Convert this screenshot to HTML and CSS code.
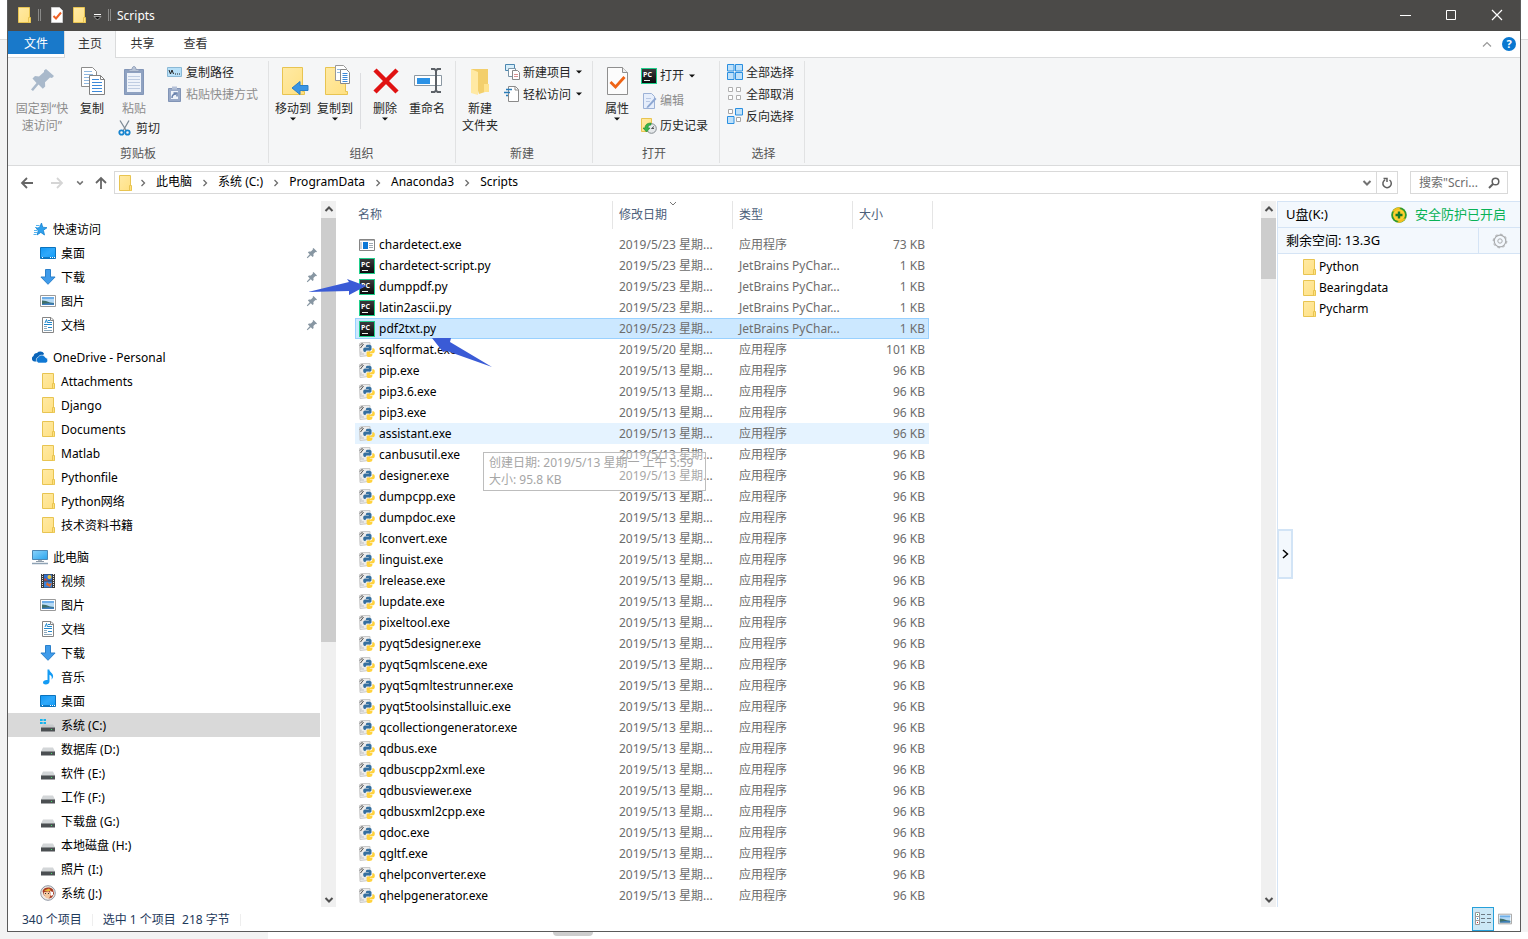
FILE: index.html
```html
<!DOCTYPE html>
<html lang="zh-CN">
<head>
<meta charset="utf-8">
<title>Scripts</title>
<link rel="stylesheet" href="styles.css">
</head>
<body>
<svg class="defs" aria-hidden="true">
  <linearGradient id="gf" x1="0" y1="0" x2="1" y2="1"><stop offset="0" stop-color="#ffeaa5"/><stop offset="1" stop-color="#ffe081"/></linearGradient>
  <linearGradient id="gd" x1="0" y1="0" x2="1" y2="1"><stop offset="0" stop-color="#0f97f5"/><stop offset=".5" stop-color="#2fa9fb"/><stop offset="1" stop-color="#0f9bf8"/></linearGradient>
  <linearGradient id="gm" x1="0" y1="0" x2="1" y2="1"><stop offset="0" stop-color="#8bd3fb"/><stop offset="1" stop-color="#2aa5ee"/></linearGradient>
  <linearGradient id="gp" x1="0" y1="0" x2="0" y2="1"><stop offset="0" stop-color="#3a3a3c"/><stop offset="1" stop-color="#0b0b0d"/></linearGradient>
  <symbol id="folder" viewBox="0 0 16 16"><path d="M2.500.5h11v11h1v4h-12z" fill="url(#gf)" stroke="#e8c451"/><path d="M12.500 15v-4.500h2v5" fill="#ffe17f" stroke="#e8c451"/></symbol>
  <symbol id="star" viewBox="0 0 16 16"><path d="M9.500 2l1.200 4.200 4.300.5-3.600 2.600 1.100 4.700-3.700-2.600-3.800 2.600 1.300-4.500L4 7.300l3.500-.8z" fill="#2ea0ec" stroke="#1683d0" stroke-width=".8"/><path d="M4 4.500h3.500M3 6.500h2M2 9.500h3.500M2 11.500h3M1.500 13.500h3" stroke="#56b3ee"/></symbol>
  <symbol id="desktop" viewBox="0 0 16 16"><path d="M.5 2.500h15v11H.5z" fill="url(#gd)" stroke="#0b73bd"/><path d="M1 12.500h14" stroke="#0f79c4"/><path d="M2 12.500h1M10 12.500h1M12 12.500h1M14 12.500h1" stroke="#fff"/></symbol>
  <symbol id="down" viewBox="0 0 16 16"><path d="M5.500.5h5v7.500h4.600L8 15.300.9 8h4.600z" fill="#3f9bea" stroke="#2b80cb"/></symbol>
  <symbol id="picture" viewBox="0 0 16 16"><path d="M.5 2.500h15v11H.5z" fill="#fff" stroke="#9a9a9a"/><path d="M2 4h12v8H2z" fill="#b5d9f5"/><path d="M2 4h12v2H2z" fill="#6eaee8"/><path d="M2 7.500l4 .5 4 1.500 4 .5v2H2z" fill="#3f6f6a"/><path d="M2 11l6-.7 6 .3V12H2z" fill="#3e7fc0"/></symbol>
  <symbol id="docs" viewBox="0 0 16 16"><path d="M2.500.5h8.500l2.500 2.500v12.500h-11z" fill="#fff" stroke="#858585"/><path d="M10.500.5v3h3" fill="none" stroke="#858585"/><path d="M5 6l1.500-3.500L7.500 6M8 3.500h2M8 5.500h4M4 7.500h8M8 10.500h4" fill="none" stroke="#2288cc"/><path d="M4 9.500h3M4 11.500h3M4 13.500h8" stroke="#8da9bd"/></symbol>
  <symbol id="cloud" viewBox="0 0 16 16"><path d="M2.500 12.500A2.900 2.900 0 0 1 1.500 7 3.800 3.800 0 0 1 5 4 4.500 4.500 0 0 1 12 4.500L8 12.500z" fill="#0a64b8"/><path d="M6.500 14a3.200 3.200 0 0 1-.3-6 4.200 4.200 0 0 1 7.300.5A2.900 2.900 0 0 1 14 14z" fill="#0f78d4" stroke="#fff" stroke-width=".6"/></symbol>
  <symbol id="pc" viewBox="0 0 16 16"><path d="M.5 1.500h15v9H.5z" fill="url(#gm)" stroke="#4d87b4"/><path d="M6 11h4v1H6z" fill="#aab4bc"/><path d="M4 12.500h8" stroke="#8e9ba8"/><path d="M0 14.500h16" stroke="#8fa3b5" stroke-width="1.500"/></symbol>
  <symbol id="video" viewBox="0 0 16 16"><path d="M1 1h14v14H1z" fill="#3b3b3b"/><path d="M2.500 1v14M13.500 1v14" stroke="#e8e8e8" stroke-dasharray="1 1"/><path d="M4 1.500h8v6H4z" fill="#2f6fd0"/><path d="M4 8.500h8v6H4z" fill="#3b83dc"/><circle cx="9.500" cy="4" r="2" fill="#e8c33f"/><path d="M5 5l3 2.500H4z" fill="#d8452f"/><path d="M7 9l2 2 3-1-2 4-4-2z" fill="#e06a2a"/></symbol>
  <symbol id="music" viewBox="0 0 16 16"><path d="M7.500.5h1.800c.2 2.500 4 3.500 3.800 7-.1 1.300-.9 2.300-1.600 3 .8-2.600 0-3.900-2-4.800v6.800c0 1.800-1.800 3-3.800 3-1.600 0-2.700-.8-2.700-2 0-1.600 2-2.800 4.500-2.500z" fill="#149bf4"/></symbol>
  <symbol id="drive" viewBox="0 0 16 16"><path d="M3 6.500h10l2 4H1z" fill="#d3d6d8"/><path d="M1 10.500h14v4H1z" fill="#4b4f52"/><path d="M1 10.500h14" stroke="#8c9092"/><path d="M11 12.500h1" stroke="#46e36b"/></symbol>
  <symbol id="sysdrive" viewBox="0 0 16 16"><path d="M3 7.500h10l2 3H1z" fill="#c6c9cb"/><path d="M1 10.500h14v4H1z" fill="#4b4f52"/><path d="M11 12.500h1" stroke="#46e36b"/><path d="M0 2h2.700v2H0zM3.500 2H6v2H3.500zM0 5h2.700v2H0zM3.500 5H6v2H3.500z" fill="#16b3ee"/></symbol>
  <symbol id="face" viewBox="0 0 16 16"><circle cx="8" cy="8" r="7.300" fill="#efe9e2" stroke="#8f96a3"/><path d="M2.500 6C4 2 10 1.500 13 4.500l1 4-2 4-3 1-5-3z" fill="#a63a24"/><path d="M4 5.500l5-2 2 2-3 1z" fill="#e8b93c"/><path d="M4 7l5-.5 2 3-2 4-3-.5-2-3z" fill="#f3c7a0"/><path d="M10 6l3 1v3l-2 1z" fill="#fff"/><path d="M5 8.500h1M8 8.500h1" stroke="#333"/></symbol>
  <symbol id="pin" viewBox="0 0 12 12"><path d="M7.500 1L11 4.500l-.8.8-.8-.2-2 2 .2 2-1 1L4.800 8.300 1.500 11.200l-.7-.7 2.900-3.300L1.900 5.400l1-1 2 .2 2-2-.2-.8z" fill="#8796a2"/></symbol>
  <symbol id="pycharm" viewBox="0 0 16 16"><path d="M0 0h16v16H0z" fill="#20cf8c"/><path d="M1 1h14v14H1z" fill="url(#gp)"/><path d="M3 12.500h6" stroke="#eee"/><text x="2" y="8.500" class="pct">PC</text></symbol>
  <symbol id="exe" viewBox="0 0 16 16"><path d="M.5 2.500h15v11H.5z" fill="#fff" stroke="#858585"/><path d="M1 3.500h14" stroke="#b5b5b5"/><path d="M4 5h5v7H4z" fill="#0b78d7"/><path d="M2 5v7M10 6.500h4M10 8.500h4M10 10.500h4" stroke="#9fa9b2"/></symbol>
  <symbol id="pyexe" viewBox="0 0 16 16"><path d="M.5 1.500l2-1h8.500v3l-1 10-9 1z" fill="#ececec" stroke="#c9c9c9"/><path d="M1 3.500L3.500 1M1.500 6l3-4" stroke="#4a4a4a"/><path d="M2 9.500v3.500M4 11v2" stroke="#bdbdbd"/><path d="M9.500 2.700c2 0 3 .5 3 1.600v2.900c0 .9-.7 1.300-1.500 1.300H8.200C7 8.500 6.600 9.200 6.600 10H5.700C4.600 10 4.200 8.900 4.200 7.500S5 5.400 6 5.400h3.800V4.900H6.900V4.100c0-1 1.200-1.400 2.600-1.400z" fill="#356f9f"/><path d="M13.300 6.300h1c1 0 1.500 1.100 1.500 2.500s-.6 2.500-1.600 2.500h-3.600v.5h2.800v1.300c0 1.300-1.200 1.900-2.900 1.900s-2.900-.5-2.900-1.800V10.800c0-.9.700-1.400 1.500-1.400h2.500c1 0 1.700-.8 1.700-1.700z" fill="#ffd23e"/></symbol>
  <symbol id="crumb" viewBox="0 0 8 8"><path d="M2.500 1L5.500 4 2.500 7" fill="none" stroke="#6d6d6d" stroke-width="1.300"/></symbol>
  <symbol id="up" viewBox="0 0 10 10"><path d="M1.500 7L5 3.500 8.500 7" fill="none" stroke="#505050" stroke-width="2"/></symbol>
  <symbol id="dn" viewBox="0 0 10 10"><path d="M1.500 3L5 6.500 8.500 3" fill="none" stroke="#505050" stroke-width="2"/></symbol>
  <symbol id="tri" viewBox="0 0 6 4"><path d="M0 .5h6L3 3.500z" fill="#111"/></symbol>
</svg>

<div class="window">
  <header class="titlebar">
    <svg class="i"><use href="#folder"/></svg>
    <span class="bars"></span>
    <svg class="i"><path d="M2.500.5h8l3 3v12h-11z" fill="#fff" stroke="#ccc"/><path d="M4.500 9l2.500 2.500 5-6" fill="none" stroke="#ee6125" stroke-width="2"/></svg>
    <svg class="i qa"><use href="#folder"/></svg>
    <svg class="i qd" viewBox="0 0 16 16"><path d="M5 7.500h7" stroke="#fff"/><path d="M5 9.500h7L8.500 13z" fill="#111" stroke="#ddd" stroke-width=".6"/></svg>
    <span class="bars b2"></span>
    <h1>Scripts</h1>
    <div class="controls">
      <button aria-label="最小化"><svg class="i12"><path d="M1 6.500h11" stroke="#fff"/></svg></button>
      <button aria-label="最大化"><svg class="i12"><path d="M1.500 1.500h9v9h-9z" fill="none" stroke="#fff"/></svg></button>
      <button aria-label="关闭"><svg class="i12"><path d="M1 1l10 10M11 1L1 11" stroke="#fff" stroke-width="1.200"/></svg></button>
    </div>
  </header>

  <nav class="tabs">
    <button class="file">文件</button>
    <button class="active">主页</button>
    <button>共享</button>
    <button>查看</button>
    <span class="tabtools">
      <button aria-label="折叠"><svg class="i12"><path d="M2 8.500l4-4 4 4" fill="none" stroke="#999" stroke-width="1.200"/></svg></button>
      <button class="help" aria-label="帮助">?</button>
    </span>
  </nav>

  <div class="ribbon">
    <section class="group g1">
      <div class="tools">
        <button class="big w60 off"><svg class="i32"><path d="M18 5l8 7-2 2-2-.4-5 4.600.2 4.300-2.400 2.300-4.300-4.200L5 27l-2-1.500L8.500 19l-4-4.500L7 12l4 .4 5-4.500V6.500z" transform="translate(2 -1)" fill="#a9b9cb"/></svg>固定到“快<br>速访问”</button>
        <button class="big w40"><svg class="i32"><path d="M5.500 2.500h11l4 4v15h-15z" fill="#fff" stroke="#8c8c8c"/><path d="M8 6.500h8M8 9.500h9M8 12.500h9M8 15.500h9M8 18.500h9" stroke="#8fb8e0"/><path d="M13.500 10.500h11l4 4v15h-15z" fill="#fff" stroke="#808080"/><path d="M24.500 10.500v4h4" fill="none" stroke="#808080"/><path d="M16 14.500h7M16 17.500h10M16 20.500h10M16 23.500h10M16 26.500h10" stroke="#3d89d8"/></svg>复制</button>
        <div class="col">
          <button class="big w34 off"><svg class="i32"><path d="M6.500 4.500h19v25h-19z" fill="#8fa2c1" stroke="#8296b8"/><path d="M9 8h14v19H9z" fill="#eef3fa"/><path d="M10 11.500h12M10 14.500h12M10 17.500h12M10 20.500h12M10 23.500h12" stroke="#bfcde2"/><path d="M11 6.500h10v-2h-3c0-4-4-4-4 0h-3z" fill="#b8c4d6" stroke="#8e9db8"/></svg>粘贴</button>
          <button class="sm cut"><svg class="i"><path d="M3 .5L9.500 11M12 .5L6 11" stroke="#7d8b96" stroke-width="1.300"/><circle cx="4.500" cy="12.500" r="2.200" fill="none" stroke="#1784cf" stroke-width="1.800"/><circle cx="10.500" cy="12.500" r="2.200" fill="none" stroke="#1784cf" stroke-width="1.800"/></svg>剪切</button>
        </div>
        <div class="list pad">
          <button class="sm"><svg class="i"><path d="M.5 3.500h14v9H.5z" fill="#b7e0f8" stroke="#8bb9d6"/><path d="M2 6l1.500 4L5 6l1.500 4" fill="none" stroke="#222" /><path d="M8 10h1M10 10h1M12 10h1" stroke="#222"/></svg>复制路径</button>
          <button class="sm off"><svg class="i"><path d="M1.500 2.500h12v13h-12z" fill="#98a9c8" stroke="#8194b6"/><path d="M4 5h7v8H4z" fill="#eef3fa"/><path d="M5 .5h5v3H5z" fill="#b4c0d6"/><path d="M5 12c0-3 1-4 4-4M6.500 7H10v3.500" fill="none" stroke="#6982ad" stroke-width="1.500"/></svg>粘贴快捷方式</button>
        </div>
      </div>
      <h2>剪贴板</h2>
    </section>
    <section class="group g2">
      <div class="tools">
        <button class="big w42"><svg class="i32"><path d="M5.500 2.500h20v24h2v3h-22z" fill="url(#gf)" stroke="#e8c451"/><path d="M31 20.500h-8v-4l-8 6.500 8 6.500v-4h8z" fill="#3a95e4" stroke="#2a7fc8"/></svg>移动到<svg class="t"><use href="#tri"/></svg></button>
        <button class="big w42"><svg class="i32"><path d="M6.500 2.500h20v24h2v3h-22z" fill="url(#gf)" stroke="#e8c451"/><path d="M16.500.5h8l3 3v12h-11z" fill="#fff" stroke="#999"/><path d="M18 4.500h7M18 7.500h7" stroke="#8fb8e0"/><path d="M21.500 4.500h6l3 3v11h-9z" fill="#fff" stroke="#888"/><path d="M23.500 8.500h5M23.500 10.500h5M23.500 12.500h5M23.500 14.500h5M23.500 16.500h5" stroke="#3d89d8"/></svg>复制到<svg class="t"><use href="#tri"/></svg></button>
        <span class="sep"></span>
        <button class="big w42"><svg class="i32"><path d="M6 5l22 22M28 5L6 27" stroke="#e01212" stroke-width="4.500"/></svg>删除<svg class="t"><use href="#tri"/></svg></button>
        <button class="big w42"><svg class="i32"><path d="M3.500 10.500h27v10h-27z" fill="#fff" stroke="#8b98a3"/><path d="M6 13h13v6H6z" fill="#2b92e6"/><path d="M20 4h3.500l1.500 1.500L26.500 4H30M25 5v21M20 27h3.500l1.500-1.500 1.500 1.500H30" fill="none" stroke="#5c6167" stroke-width="2"/></svg>重命名</button>
      </div>
      <h2>组织</h2>
    </section>
    <section class="group g3">
      <div class="tools">
        <button class="big w48"><svg class="i32"><path d="M7 4h17v22l-9 3z" fill="#f3cf6c"/><path d="M7 4l7 3v23l-7-2z" fill="#ffe9a4"/><path d="M20 19h5v8h-5z" fill="#ffe38e"/></svg>新建<br>文件夹</button>
        <div class="list">
          <button class="sm"><svg class="i"><path d="M1.500.5h9v6h-9z" fill="#d7eefa" stroke="#4c87b0"/><path d="M4.500 4.500h7v8h-7z" fill="#fff" stroke="#7a95a8"/><path d="M8.500 6.500h5l2 2v7h-7z" fill="#fff" stroke="#888"/><path d="M10 10.500h4M10 12.500h4" stroke="#d89090"/></svg>新建项目<svg class="t"><use href="#tri"/></svg></button>
          <button class="sm"><svg class="i"><path d="M4.500.5h7l3 3v12h-10z" fill="#fff" stroke="#8a8a8a"/><path d="M11 .5v3.500h3.500" fill="none" stroke="#8a8a8a"/><path d="M2 3.500h6M0 6.500h6M2 9.500h2" stroke="#2a7cb8" stroke-width="1.400"/></svg>轻松访问<svg class="t"><use href="#tri"/></svg></button>
        </div>
      </div>
      <h2>新建</h2>
    </section>
    <section class="group g4">
      <div class="tools">
        <button class="big w48"><svg class="i32"><path d="M6.500 2.500h15l5 5v22h-20z" fill="#fcfcfc" stroke="#8f8f8f"/><path d="M21.500 2.500v5h5" fill="#eee" stroke="#8f8f8f"/><path d="M9.500 17l5 5 9-10" fill="none" stroke="#ef6416" stroke-width="2.800"/></svg>属性<svg class="t"><use href="#tri"/></svg></button>
        <div class="list tall">
          <button class="sm"><svg class="i"><use href="#pycharm"/></svg>打开<svg class="t"><use href="#tri"/></svg></button>
          <button class="sm off"><svg class="i"><path d="M2.500.5h8l3 3v12h-11z" fill="#e6eefb" stroke="#9db2d6"/><path d="M5 5.500h5M5 8.500h4" stroke="#b8c8e4"/><path d="M6 13.500l8-9 1.500 1.500-8 8.500-2 .5z" fill="#8fa8d2"/></svg>编辑</button>
          <button class="sm"><svg class="i"><path d="M.5.5h10v13H.5z" fill="url(#gf)" stroke="#e8c451"/><circle cx="10.500" cy="10.500" r="4.800" fill="#e5e8ea" stroke="#858b90"/><path d="M10.500 10.500l2.500-2M10.500 10.500H13" stroke="#555"/><path d="M10 5C5 5 4 8 4 10H2l3.500 4L9 10H7c0-2 1-3 3-3z" fill="#39b44a" stroke="#1e8a32" stroke-width=".6"/></svg>历史记录</button>
        </div>
      </div>
      <h2>打开</h2>
    </section>
    <section class="group g5">
      <div class="tools">
        <div class="list">
          <button class="sm"><svg class="i"><path d="M.5.500h6.500v6.500H.5zM8.500.5h7v6.500h-7zM.5 8.500h6.500v7H.5zM8.500 8.500h7v7h-7z" fill="#bfe1fa" stroke="#2a8fe0"/></svg>全部选择</button>
          <button class="sm"><svg class="i"><path d="M1.500 1.500h4v4h-4zM9.500 1.500h4v4h-4zM1.500 9.500h4v4h-4zM9.500 9.500h4v4h-4z" fill="#fff" stroke="#b0b0b0"/></svg>全部取消</button>
          <button class="sm"><svg class="i"><path d="M1.500 1.500h4v4h-4zM9.500 9.500h4v4h-4z" fill="#fff" stroke="#a5a5a5"/><path d="M8.500.5h7v6.500h-7zM.5 8.500h6.500v7H.5z" fill="#bfe1fa" stroke="#2a8fe0"/></svg>反向选择</button>
        </div>
      </div>
      <h2>选择</h2>
    </section>
  </div>

  <div class="addressrow">
    <button class="nb w30" aria-label="后退"><svg class="i14"><path d="M13 7H2M7 2L2 7l5 5" fill="none" stroke="#666" stroke-width="1.800"/></svg></button>
    <button class="nb w30" aria-label="前进"><svg class="i14"><path d="M1 7h11M7 2l5 5-5 5" fill="none" stroke="#d5d5d5" stroke-width="1.800"/></svg></button>
    <button class="nb w16" aria-label="最近位置"><svg class="i8 soft"><use href="#dn"/></svg></button>
    <button class="nb w26" aria-label="上移"><svg class="i14"><path d="M7 13V2M2 7l5-5 5 5" fill="none" stroke="#666" stroke-width="1.800"/></svg></button>
    <div class="address">
      <svg class="i"><use href="#folder"/></svg>
      <svg class="c"><use href="#crumb"/></svg><a href="#pc">此电脑</a>
      <svg class="c"><use href="#crumb"/></svg><a href="#c">系统 (C:)</a>
      <svg class="c"><use href="#crumb"/></svg><a href="#pd">ProgramData</a>
      <svg class="c"><use href="#crumb"/></svg><a href="#an">Anaconda3</a>
      <svg class="c"><use href="#crumb"/></svg><a href="#sc">Scripts</a>
      <button class="nb hist" aria-label="历史"><svg class="i10 soft"><use href="#dn"/></svg></button>
      <button class="nb refresh" aria-label="刷新"><svg class="i12"><path d="M4 2.800A4.200 4.200 0 1 0 8.500 3M2.500 1.500H6V5" fill="none" stroke="#606060" stroke-width="1.500"/></svg></button>
    </div>
    <label class="search"><input type="text" aria-label="搜索" placeholder="搜索&quot;Scri..."><svg class="i12"><circle cx="7.500" cy="4.500" r="3.300" fill="none" stroke="#606060" stroke-width="1.500"/><path d="M5 7L1 11" stroke="#606060" stroke-width="2"/></svg></label>
  </div>

  <main class="body">
    <nav class="tree">
      <ul>
        <li><a href="#q"><svg class="i"><use href="#star"/></svg>快速访问</a>
          <ul>
            <li><a href="#d"><svg class="i"><use href="#desktop"/></svg>桌面<svg class="p"><use href="#pin"/></svg></a></li>
            <li><a href="#d"><svg class="i"><use href="#down"/></svg>下载<svg class="p"><use href="#pin"/></svg></a></li>
            <li><a href="#d"><svg class="i"><use href="#picture"/></svg>图片<svg class="p"><use href="#pin"/></svg></a></li>
            <li><a href="#d"><svg class="i"><use href="#docs"/></svg>文档<svg class="p"><use href="#pin"/></svg></a></li>
          </ul>
        </li>
        <li><a href="#o"><svg class="i"><use href="#cloud"/></svg>OneDrive - Personal</a>
          <ul>
            <li><a href="#o"><svg class="i"><use href="#folder"/></svg>Attachments</a></li>
            <li><a href="#o"><svg class="i"><use href="#folder"/></svg>Django</a></li>
            <li><a href="#o"><svg class="i"><use href="#folder"/></svg>Documents</a></li>
            <li><a href="#o"><svg class="i"><use href="#folder"/></svg>Matlab</a></li>
            <li><a href="#o"><svg class="i"><use href="#folder"/></svg>Pythonfile</a></li>
            <li><a href="#o"><svg class="i"><use href="#folder"/></svg>Python网络</a></li>
            <li><a href="#o"><svg class="i"><use href="#folder"/></svg>技术资料书籍</a></li>
          </ul>
        </li>
        <li><a href="#p"><svg class="i"><use href="#pc"/></svg>此电脑</a>
          <ul>
            <li><a href="#p"><svg class="i"><use href="#video"/></svg>视频</a></li>
            <li><a href="#p"><svg class="i"><use href="#picture"/></svg>图片</a></li>
            <li><a href="#p"><svg class="i"><use href="#docs"/></svg>文档</a></li>
            <li><a href="#p"><svg class="i"><use href="#down"/></svg>下载</a></li>
            <li><a href="#p"><svg class="i"><use href="#music"/></svg>音乐</a></li>
            <li><a href="#p"><svg class="i"><use href="#desktop"/></svg>桌面</a></li>
            <li><a href="#p" class="current"><svg class="i"><use href="#sysdrive"/></svg>系统 (C:)</a></li>
            <li><a href="#p"><svg class="i"><use href="#drive"/></svg>数据库 (D:)</a></li>
            <li><a href="#p"><svg class="i"><use href="#drive"/></svg>软件 (E:)</a></li>
            <li><a href="#p"><svg class="i"><use href="#drive"/></svg>工作 (F:)</a></li>
            <li><a href="#p"><svg class="i"><use href="#drive"/></svg>下载盘 (G:)</a></li>
            <li><a href="#p"><svg class="i"><use href="#drive"/></svg>本地磁盘 (H:)</a></li>
            <li><a href="#p"><svg class="i"><use href="#drive"/></svg>照片 (I:)</a></li>
            <li><a href="#p"><svg class="i"><use href="#face"/></svg>系统 (J:)</a></li>
          </ul>
        </li>
      </ul>
    </nav>
    <div class="scroll"><svg class="i10"><use href="#up"/></svg><div class="track"><div class="thumb t1"></div></div><svg class="i10"><use href="#dn"/></svg></div>

    <div class="files">
      <table>
        <colgroup><col class="cn"><col class="cd"><col class="cd"><col class="cs"><col class="ce"></colgroup>
        <thead><tr><th><span class="h first">名称</span></th><th><span class="h">修改日期<svg class="sort"><path d="M1 1l3 3 3-3" fill="none" stroke="#777"/></svg></span></th><th><span class="h">类型</span></th><th colspan="2"><span class="h">大小</span></th></tr></thead>
        <tbody>
          <tr><td><svg class="i"><use href="#exe"/></svg>chardetect.exe</td><td>2019/5/23 星期...</td><td>应用程序</td><td>73 KB</td></tr>
          <tr><td><svg class="i"><use href="#pycharm"/></svg>chardetect-script.py</td><td>2019/5/23 星期...</td><td>JetBrains PyChar...</td><td>1 KB</td></tr>
          <tr><td><svg class="i"><use href="#pycharm"/></svg>dumppdf.py</td><td>2019/5/23 星期...</td><td>JetBrains PyChar...</td><td>1 KB</td></tr>
          <tr><td><svg class="i"><use href="#pycharm"/></svg>latin2ascii.py</td><td>2019/5/23 星期...</td><td>JetBrains PyChar...</td><td>1 KB</td></tr>
          <tr class="selected"><td><svg class="i"><use href="#pycharm"/></svg>pdf2txt.py</td><td>2019/5/23 星期...</td><td>JetBrains PyChar...</td><td>1 KB</td></tr>
          <tr><td><svg class="i"><use href="#pyexe"/></svg>sqlformat.exe</td><td>2019/5/20 星期...</td><td>应用程序</td><td>101 KB</td></tr>
          <tr><td><svg class="i"><use href="#pyexe"/></svg>pip.exe</td><td>2019/5/13 星期...</td><td>应用程序</td><td>96 KB</td></tr>
          <tr><td><svg class="i"><use href="#pyexe"/></svg>pip3.6.exe</td><td>2019/5/13 星期...</td><td>应用程序</td><td>96 KB</td></tr>
          <tr><td><svg class="i"><use href="#pyexe"/></svg>pip3.exe</td><td>2019/5/13 星期...</td><td>应用程序</td><td>96 KB</td></tr>
          <tr class="hover"><td><svg class="i"><use href="#pyexe"/></svg>assistant.exe</td><td>2019/5/13 星期...</td><td>应用程序</td><td>96 KB</td></tr>
          <tr><td><svg class="i"><use href="#pyexe"/></svg>canbusutil.exe</td><td>2019/5/13 星期...</td><td>应用程序</td><td>96 KB</td></tr>
          <tr><td><svg class="i"><use href="#pyexe"/></svg>designer.exe</td><td>2019/5/13 星期...</td><td>应用程序</td><td>96 KB</td></tr>
          <tr><td><svg class="i"><use href="#pyexe"/></svg>dumpcpp.exe</td><td>2019/5/13 星期...</td><td>应用程序</td><td>96 KB</td></tr>
          <tr><td><svg class="i"><use href="#pyexe"/></svg>dumpdoc.exe</td><td>2019/5/13 星期...</td><td>应用程序</td><td>96 KB</td></tr>
          <tr><td><svg class="i"><use href="#pyexe"/></svg>lconvert.exe</td><td>2019/5/13 星期...</td><td>应用程序</td><td>96 KB</td></tr>
          <tr><td><svg class="i"><use href="#pyexe"/></svg>linguist.exe</td><td>2019/5/13 星期...</td><td>应用程序</td><td>96 KB</td></tr>
          <tr><td><svg class="i"><use href="#pyexe"/></svg>lrelease.exe</td><td>2019/5/13 星期...</td><td>应用程序</td><td>96 KB</td></tr>
          <tr><td><svg class="i"><use href="#pyexe"/></svg>lupdate.exe</td><td>2019/5/13 星期...</td><td>应用程序</td><td>96 KB</td></tr>
          <tr><td><svg class="i"><use href="#pyexe"/></svg>pixeltool.exe</td><td>2019/5/13 星期...</td><td>应用程序</td><td>96 KB</td></tr>
          <tr><td><svg class="i"><use href="#pyexe"/></svg>pyqt5designer.exe</td><td>2019/5/13 星期...</td><td>应用程序</td><td>96 KB</td></tr>
          <tr><td><svg class="i"><use href="#pyexe"/></svg>pyqt5qmlscene.exe</td><td>2019/5/13 星期...</td><td>应用程序</td><td>96 KB</td></tr>
          <tr><td><svg class="i"><use href="#pyexe"/></svg>pyqt5qmltestrunner.exe</td><td>2019/5/13 星期...</td><td>应用程序</td><td>96 KB</td></tr>
          <tr><td><svg class="i"><use href="#pyexe"/></svg>pyqt5toolsinstalluic.exe</td><td>2019/5/13 星期...</td><td>应用程序</td><td>96 KB</td></tr>
          <tr><td><svg class="i"><use href="#pyexe"/></svg>qcollectiongenerator.exe</td><td>2019/5/13 星期...</td><td>应用程序</td><td>96 KB</td></tr>
          <tr><td><svg class="i"><use href="#pyexe"/></svg>qdbus.exe</td><td>2019/5/13 星期...</td><td>应用程序</td><td>96 KB</td></tr>
          <tr><td><svg class="i"><use href="#pyexe"/></svg>qdbuscpp2xml.exe</td><td>2019/5/13 星期...</td><td>应用程序</td><td>96 KB</td></tr>
          <tr><td><svg class="i"><use href="#pyexe"/></svg>qdbusviewer.exe</td><td>2019/5/13 星期...</td><td>应用程序</td><td>96 KB</td></tr>
          <tr><td><svg class="i"><use href="#pyexe"/></svg>qdbusxml2cpp.exe</td><td>2019/5/13 星期...</td><td>应用程序</td><td>96 KB</td></tr>
          <tr><td><svg class="i"><use href="#pyexe"/></svg>qdoc.exe</td><td>2019/5/13 星期...</td><td>应用程序</td><td>96 KB</td></tr>
          <tr><td><svg class="i"><use href="#pyexe"/></svg>qgltf.exe</td><td>2019/5/13 星期...</td><td>应用程序</td><td>96 KB</td></tr>
          <tr><td><svg class="i"><use href="#pyexe"/></svg>qhelpconverter.exe</td><td>2019/5/13 星期...</td><td>应用程序</td><td>96 KB</td></tr>
          <tr><td><svg class="i"><use href="#pyexe"/></svg>qhelpgenerator.exe</td><td>2019/5/13 星期...</td><td>应用程序</td><td>96 KB</td></tr>
        </tbody>
      </table>
      <div class="tooltip" role="tooltip">创建日期: 2019/5/13 星期一 上午 5:59<br>大小: 95.8 KB</div>
    </div>
    <div class="scroll"><svg class="i10"><use href="#up"/></svg><div class="track"><div class="thumb t2"></div></div><svg class="i10"><use href="#dn"/></svg></div>

    <aside class="usb">
      <div class="urow"><span>U盘(K:)</span><svg class="i shield"><circle cx="8" cy="8" r="7.800" fill="#2f9a2c"/><circle cx="8" cy="8" r="6" fill="#ffcf2e"/><path d="M1 5A8 8 0 0 1 10 .5L7 3z" fill="#f4c01e"/><path d="M15 11a8 8 0 0 1-9 4.500L9 13z" fill="#f4c01e"/><path d="M8 4.500v7M4.500 8h7" stroke="#167a28" stroke-width="2.400"/></svg><span class="safe">安全防护已开启</span></div>
      <div class="urow"><span>剩余空间: 13.3G</span><button class="gear" aria-label="设置"><svg class="i"><circle cx="8" cy="8" r="5.800" fill="none" stroke="#a9abad" stroke-width="1.200"/><circle cx="8" cy="8" r="6.800" fill="none" stroke="#a9abad" stroke-dasharray="2.600 2.700"/><circle cx="8" cy="8" r="2.200" fill="none" stroke="#a9abad"/></svg></button></div>
      <ul>
        <li><a href="#u"><svg class="i"><use href="#folder"/></svg>Python</a></li>
        <li><a href="#u"><svg class="i"><use href="#folder"/></svg>Bearingdata</a></li>
        <li><a href="#u"><svg class="i"><use href="#folder"/></svg>Pycharm</a></li>
      </ul>
      <button class="handle" aria-label="收起"><svg class="i10"><path d="M3 1l4.500 4L3 9" fill="none" stroke="#000" stroke-width="1.500"/></svg></button>
    </aside>
  </main>

  <footer class="status">
    <span class="s">340 个项目</span><span class="s">选中 1 个项目&nbsp; 218 字节</span>
    <span class="views">
      <button class="on" aria-label="详细信息"><svg class="i"><path d="M.5 1.500h4v4h-4zM.5 5.500h4v4h-4zM.5 9.500h4v4h-4z" fill="#fff" stroke="#999"/><path d="M6 3.500h4M12 3.500h4M6 7.500h4M12 7.500h4M6 11.500h4M12 11.500h4" stroke="#6d7a84"/><path d="M2 3.500h1" stroke="#2a6"/><path d="M2 7.500h1" stroke="#28c"/><path d="M2 11.500h1" stroke="#c22"/></svg></button>
      <button aria-label="大缩略图"><svg class="i14" viewBox="0 0 16 16"><use href="#picture"/></svg></button>
    </span>
  </footer>
</div>
<div class="below"><span></span></div>
<svg class="marks" aria-hidden="true"><path d="M308 292L349 282l-2-3 19 7-17 9v-4zM432 338h19l-1 4 42 25-45-16-4 1z" fill="#3a5bd6"/></svg>
</body>
</html>
```
FILE: styles.css
```css
* { box-sizing: border-box; }
html, body { height: 100%; }
body {
  margin: 0;
  display: flex;
  flex-direction: column;
  overflow: hidden;
  background: linear-gradient(#fff 39px, #dcdcdc 39px, #dcdcdc 40px, #f3f3f3 40px);
  font: 12px/17px "Noto Sans", "Noto Sans CJK SC", sans-serif;
  color: #000;
}
button {
  border: 0;
  padding: 0;
  background: none;
  font: inherit;
  color: inherit;
}
a { color: inherit; text-decoration: none; }
ul { list-style: none; margin: 0; padding: 0; }
h1, h2 { margin: 0; font: inherit; }
svg { flex: none; display: block; }
.defs { position: absolute; width: 0; height: 0; }
.pct { font: bold 7px "Open Sans", sans-serif; fill: #fff; }
.i { width: 16px; height: 16px; }
.i8 { width: 8px; height: 8px; }
.i10 { width: 10px; height: 10px; }
.i12 { width: 12px; height: 12px; }
.i14 { width: 14px; height: 14px; }
.i32 { width: 32px; height: 32px; }
.t { width: 6px; height: 4px; }
.soft { opacity: .8; }

.window {
  flex: 1;
  min-height: 0;
  margin: 0 7px;
  border: 1px solid #5a5a5a;
  border-top: 0;
  background: #fff;
  display: flex;
  flex-direction: column;
}
.below { height: 7px; background: linear-gradient(90deg, #f3f3f3 268px, #fff 268px); }
.below span {
  display: block;
  width: 40px;
  height: 4px;
  margin-left: 553px;
  border-radius: 0 0 4px 4px;
  background: #cdcdcd;
}

.titlebar {
  height: 31px;
  flex: none;
  display: flex;
  align-items: center;
  padding: 0 0 1px 8px;
  background: #4b4a48;
  color: #fff;
}
.bars { width: 3px; height: 12px; margin: 0 8px 0 6px; border: solid #8a8a88; border-width: 0 1px; }
.qa { margin-left: 6px; }
.qd { margin-left: 2px; }
.b2 { margin: 0 6px 0 3px; }
.controls { margin-left: auto; display: flex; align-self: stretch; }
.controls button { width: 46px; display: grid; place-items: center; }

.tabs {
  height: 27px;
  flex: none;
  display: flex;
  border-bottom: 1px solid #dadbdc;
  color: #333;
}
.tabs > button { width: 53px; height: 26px; padding-bottom: 1px; }
.tabs > .file { width: 56px; height: 23px; padding: 1px 0 0; background: #1979ca; color: #fff; }
.tabs > .active { width: 52px; height: 27px; padding-bottom: 2px; background: #f5f6f7; border: solid #dadbdc; border-width: 0 1px; }
.tabtools { margin-left: auto; display: flex; align-items: center; gap: 9px; padding-right: 4px; }
.tabtools .help {
  width: 14px;
  height: 14px;
  border-radius: 50%;
  background: #0a78d0;
  color: #fff;
  font-weight: bold;
  font-size: 11px;
  line-height: 14px;
}

.ribbon {
  flex: none;
  display: flex;
  padding: 3px 0 2px;
  background: #f5f6f7;
  border-bottom: 1px solid #dadbdc;
  color: #262626;
}
.group { display: flex; flex-direction: column; height: 102px; border-right: 1px solid #e1e2e3; }
.g1 { width: 261px; padding-left: 4px; }
.g2 { width: 187px; padding-left: 3px; }
.g3 { width: 137px; }
.g4 { width: 127px; }
.g5 { width: 85px; padding-left: 7px; }
.tools { display: flex; flex: 1; align-items: flex-start; }
.group h2 { padding-right: 4px; text-align: center; color: #555; line-height: 18px; }
.big {
  display: flex;
  flex-direction: column;
  align-items: center;
  padding-top: 4px;
  white-space: nowrap;
}
.big .i32 { margin-bottom: 3px; }
.w60 { width: 60px; }
.w40 { width: 40px; }
.w34 { width: 34px; }
.w42 { width: 42px; }
.w48 { width: 48px; }
.off { color: #8d8d8d; }
.col { padding-left: 5px; width: 50px; }
.sm { display: flex; align-items: center; gap: 3px; height: 22px; white-space: nowrap; }
.sm .t { margin-left: 2px; }
.cut { gap: 3px; }
.list.pad { padding-left: 5px; }
.list.tall { padding-top: 2px; }
.list.tall .sm { height: 25px; }
.sep { width: 1px; height: 56px; margin: 12px 3px 0 4px; background: #dcdde0; }

.addressrow { flex: none; display: flex; padding: 5px 12px 7px 4px; }
.nb { display: grid; place-items: center; height: 23px; }
.w30 { width: 30px; }
.w16 { width: 16px; }
.w26 { width: 26px; }
.address {
  flex: 1;
  display: flex;
  align-items: center;
  height: 23px;
  padding-left: 2px;
  border: 1px solid #d9d9d9;
}
.address a { padding-bottom: 2px; }
.address .c { width: 8px; height: 8px; margin: 0 9px; }
.address .i + .c { margin-left: 6px; }
.hist { margin-left: auto; width: 18px; }
.refresh { width: 21px; border-left: 1px solid #d9d9d9; }
.search {
  display: flex;
  align-items: center;
  width: 98px;
  height: 23px;
  margin-left: 12px;
  padding: 0 7px 0 8px;
  border: 1px solid #d9d9d9;
}
.search input {
  flex: 1;
  min-width: 0;
  padding: 0;
  border: 0;
  outline: 0;
  font: inherit;
}
.search input::placeholder { color: #6d6d6d; opacity: 1; }

.body { flex: 1; min-height: 0; display: flex; }
.tree { width: 313px; overflow: hidden; padding: 16px 1px 0 0; }
.tree > ul { display: flex; flex-direction: column; gap: 8px; }
.tree a {
  display: flex;
  align-items: center;
  gap: 5px;
  height: 24px;
  padding: 0 2px 0 24px;
}
.tree li li a { padding-left: 32px; }
.tree .current { background: #d9d9d9; }
.p { width: 12px; height: 12px; margin-left: auto; }
.scroll {
  width: 16px;
  background: #f0f0f0;
  display: flex;
  flex-direction: column;
  align-items: center;
  gap: 4px;
  padding: 3px 0 2px;
  border-right: 1px solid #fff;
}
.track { flex: 1; align-self: stretch; }
.thumb { background: #cdcdcd; }
.t1 { height: 63%; }
.t2 { height: 9%; }

.files { position: relative; flex: 1; min-width: 0; overflow: hidden; padding-left: 18px; }
table { table-layout: fixed; width: 578px; border-spacing: 0; }
.cn { width: 258px; }
.cd { width: 120px; }
.cs { width: 76px; }
.ce { width: 4px; }
th { padding: 0 0 5px; font-weight: normal; text-align: left; color: #4c607a; }
.h { display: block; position: relative; height: 28px; padding-left: 6px; line-height: 27px; border-right: 1px solid #e5e5e5; }
.h.first { padding-left: 3px; }
.sort { position: absolute; top: 0; left: 56px; width: 8px; height: 5px; }
td { height: 21px; padding: 0 0 0 6px; color: #6d6d6d; white-space: nowrap; line-height: 19px; }
td:first-child { padding-left: 4px; color: #000; }
td:first-child .i { float: left; margin: 2px 4px 0 0; }
td:last-child { padding: 0 4px 0 0; text-align: right; }
.selected td { background: #cce8ff; box-shadow: inset 0 1px #99d1ff, inset 0 -1px #99d1ff; }
.selected td:first-child { box-shadow: inset 1px 1px #99d1ff, inset 0 -1px #99d1ff; }
.selected td:last-child { box-shadow: inset -1px 1px #99d1ff, inset 0 -1px #99d1ff; }
.hover td { background: #e5f3ff; }
.tooltip {
  position: absolute;
  left: 146px;
  top: 251px;
  padding: 1px 12px 2px 5px;
  border: 1px solid #bdbdbd;
  background: rgba(255, 255, 255, .4);
  color: #a6a6a6;
  white-space: nowrap;
}

.usb { position: relative; width: 243px; border-left: 1px solid #d5e4f5; font-size: 13px; }
.urow {
  display: flex;
  align-items: center;
  height: 26px;
  padding-left: 8px;
  background: #f3f8fd;
  border-top: 1px solid #d5e4f5;
}
.urow + .urow { height: 27px; border-bottom: 1px solid #d5e4f5; }
.shield { margin-left: auto; }
.safe { color: #09b257; margin: 0 14px 0 8px; }
.gear { display: grid; place-items: center; width: 42px; height: 25px; margin-left: auto; border-left: 1px solid #d5e4f5; }
.usb ul { padding: 2px 0 0 23px; font-size: 12px; }
.usb li a { display: flex; align-items: center; gap: 2px; height: 21px; }
.handle {
  position: absolute;
  left: 0;
  top: 328px;
  width: 15px;
  height: 50px;
  border: 2px solid #d2e4f6;
  border-left-width: 1px;
  background: #f3f8fd;
  display: grid;
  place-items: center;
}

.status { flex: none; display: flex; height: 24px; color: #1e395b; padding-left: 14px; }
.s { height: 12px; margin: 7px 10px 0 0; padding-right: 10px; line-height: 12px; border-right: 1px solid #eee; }
.views { margin-left: auto; display: flex; padding-right: 8px; gap: 4px; }
.views button { display: grid; place-items: center; }
.views .on { width: 22px; background: #cce8f6; border: 1px solid #26a0da; }
.marks { position: absolute; left: 0; top: 0; width: 500px; height: 380px; pointer-events: none; }
```
